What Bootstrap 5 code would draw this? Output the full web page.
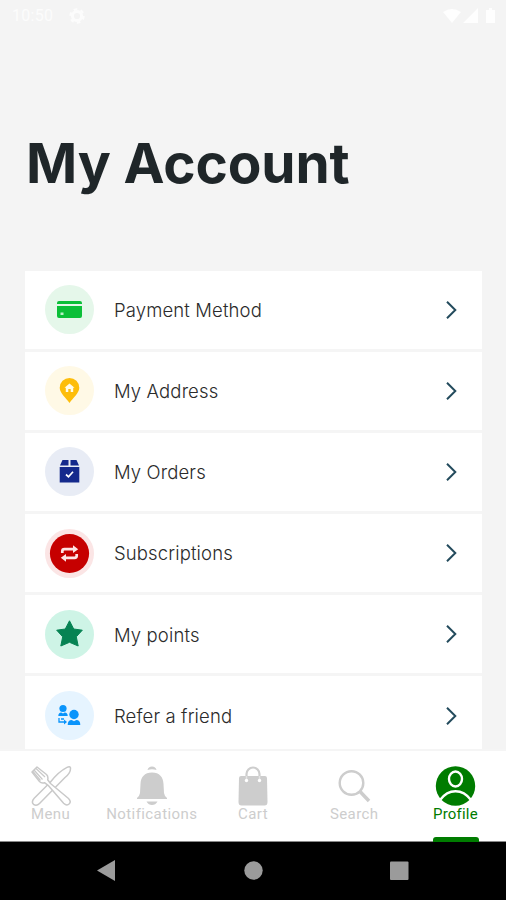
<!DOCTYPE html>
<html lang="en">
<head>
<meta charset="utf-8">
<meta name="viewport" content="width=device-width, initial-scale=1">
<title>My Account</title>
<link href="https://cdn.jsdelivr.net/npm/bootstrap@5.3.0/dist/css/bootstrap.min.css" rel="stylesheet">
<style>
body{background:#f4f4f4;font-family:Inter,"Liberation Sans",sans-serif;color:#222}
.screen{width:506px;height:900px}
.status{height:32px;padding:0 9px 0 12px;font:400 16px/32px Roboto,sans-serif;letter-spacing:.3px;color:#fcfcfc}
.title{height:238.5px;padding:99px 0 0 26px;font-size:55px;font-weight:650;line-height:64px;color:#1f2629;letter-spacing:-.12px}
.menu-rows{margin:0 24px 0 25px}
.menu-row{height:81.2px;border:0;border-bottom:3px solid #f5f5f5;border-radius:0!important;padding:0 25px 0 20px;background:#fff;color:#2b2b2b}
.disc{width:49px;height:49px;margin-right:20px}
.row-label{font-size:18.5px;font-weight:300;letter-spacing:.13px;line-height:24px;padding-top:.5px}
.tabs{height:92px;border-top:2px solid #f5f5f5;font:400 15px/18px Roboto,sans-serif;letter-spacing:.42px;color:#cdcdcd}
.tab{padding-top:14px;color:#cdcdcd;text-decoration:none}
.tab svg{width:42px;height:42px;margin-bottom:-2px}
.tab-on{color:#007c00;letter-spacing:.2px}
.tab-on::after{content:"";position:absolute;bottom:-1px;left:50%;width:46px;height:5px;margin-left:-22.5px;background:#007c00;border-radius:3px 3px 0 0}
.keys{height:59px;background:#000;border-top:1px solid #888}
</style>
<script src="https://cdn.jsdelivr.net/npm/bootstrap@5.3.0/dist/js/bootstrap.bundle.min.js"></script>
</head>
<body>
<div class="screen d-flex flex-column overflow-hidden">
  <header class="status d-flex align-items-center flex-shrink-0">
    <span>10:50</span>
    <svg class="ms-3" width="16" height="16" viewBox="0 0 16 16" fill="none" stroke="currentColor"><circle cx="8" cy="8" r="4.6" stroke-width="3"/><circle cx="8" cy="8" r="6.6" stroke-width="2.2" stroke-dasharray="3.5 3.41"/></svg>
    <svg class="ms-auto" width="54" height="18" viewBox="0 0 54 18" fill="#fefefe"><path d="M0 5Q9-1 18 5L9 16ZM20 16 35 1v15ZM43 3h3V1h3v2h3v13h-9Z"/></svg>
  </header>
  <main class="flex-fill overflow-hidden">
    <h1 class="title m-0">My Account</h1>
    <div class="list-group menu-rows">
      <a href="#" class="list-group-item menu-row d-flex align-items-center">
        <svg class="disc" viewBox="0 0 49 49"><circle cx="24.5" cy="24.5" r="24.5" fill="#e5f7ea"/><path fill="#0bbf38" d="M12 19v-1q0-2 2-2h21q2 0 2 2v1ZM12 21h25v10q0 2-2 2H14q-2 0-2-2Z"/><path fill="#b9f0c6" d="M15.500 27.500h3v2.500h-3Z"/></svg>
        <span class="row-label flex-fill">Payment Method</span>
        <svg width="11" height="18" viewBox="0 0 11 18" fill="none" stroke="#244b5d" stroke-width="2"><path d="m1 .8 8.3 8.2L1 17.2"/></svg>
      </a>
      <a href="#" class="list-group-item menu-row d-flex align-items-center">
        <svg class="disc" viewBox="0 0 49 49"><circle cx="24.5" cy="24.5" r="24.5" fill="#fff9e6"/><path fill="#fdbd0b" d="M24.5 37C21 32 14.7 27 14.7 21.8a9.8 9.8 0 0 1 19.6 0C34.300 27 28 32 24.500 37Z"/><path fill="#fffbe9" d="m24.500 17.500 5 4.200h-1.300V26h-2.500v-3h-2.400v3h-2.500v-4.300h-1.300Z"/></svg>
        <span class="row-label flex-fill">My Address</span>
        <svg width="11" height="18" viewBox="0 0 11 18" fill="none" stroke="#244b5d" stroke-width="2"><path d="m1 .8 8.3 8.2L1 17.2"/></svg>
      </a>
      <a href="#" class="list-group-item menu-row d-flex align-items-center">
        <svg class="disc" viewBox="0 0 49 49"><circle cx="24.5" cy="24.5" r="24.5" fill="#e8ecf5"/><path fill="#14298c" d="M15 18.500 17.500 13h6v5.500ZM25.500 13h6l2.500 5.500h-8.500ZM14.700 20h19.600v15.500H14.700Z"/><path d="m21 27.500 2.500 2.300 4.500-5" fill="none" stroke="#fff" stroke-width="1.700"/></svg>
        <span class="row-label flex-fill">My Orders</span>
        <svg width="11" height="18" viewBox="0 0 11 18" fill="none" stroke="#244b5d" stroke-width="2"><path d="m1 .8 8.3 8.2L1 17.2"/></svg>
      </a>
      <a href="#" class="list-group-item menu-row d-flex align-items-center">
        <svg class="disc" viewBox="0 0 49 49"><circle cx="24.5" cy="24.5" r="24.5" fill="#fbe5e5"/><circle cx="24.500" cy="24.500" r="19.600" fill="#c60000"/><path d="M17.300 24v-1.800q0-2 2.200-2H29M31.700 25v1.800q0 2-2.200 2H20" fill="none" stroke="#fde4e4" stroke-width="2.700"/><path fill="#fde4e4" d="m28 16.300 5.200 3.900L28 24.100ZM21 24.900l-5.200 3.900 5.200 3.900Z"/></svg>
        <span class="row-label flex-fill">Subscriptions</span>
        <svg width="11" height="18" viewBox="0 0 11 18" fill="none" stroke="#244b5d" stroke-width="2"><path d="m1 .8 8.3 8.2L1 17.2"/></svg>
      </a>
      <a href="#" class="list-group-item menu-row d-flex align-items-center">
        <svg class="disc" viewBox="0 0 49 49"><circle cx="24.5" cy="24.5" r="24.5" fill="#cef4e6"/><path fill="#068353" stroke="#068353" stroke-linejoin="round" d="m24.500 10.800 4.200 8.200 8.600 1.200-6 6.600 1.900 9.200-8.700-3.700-8.700 3.700 1.900-9.200-6-6.600 8.600-1.200Z"/></svg>
        <span class="row-label flex-fill">My points</span>
        <svg width="11" height="18" viewBox="0 0 11 18" fill="none" stroke="#244b5d" stroke-width="2"><path d="m1 .8 8.3 8.2L1 17.2"/></svg>
      </a>
      <a href="#" class="list-group-item menu-row d-flex align-items-center">
        <svg class="disc" viewBox="0 0 49 49"><circle cx="24.5" cy="24.5" r="24.5" fill="#e6f4ff"/><g fill="#0a94fb"><circle cx="18" cy="17.500" r="3.600"/><path d="M13.300 25q0-3.500 3-3.500l1.700 1 1.700-1q3 0 3 3.500Z"/><circle cx="29" cy="23.500" r="4.700"/><path d="M22.700 34q0-5 4-5l2.300 1.300 2.300-1.300q4 0 4 5ZM19 28.500l3 2.500-3 2.500Z"/></g><path d="M14 27v4h6M16 28h3" fill="none" stroke="#0a94fb" stroke-width="1.300"/></svg>
        <span class="row-label flex-fill">Refer a friend</span>
        <svg width="11" height="18" viewBox="0 0 11 18" fill="none" stroke="#244b5d" stroke-width="2"><path d="m1 .8 8.3 8.2L1 17.2"/></svg>
      </a>
    </div>
  </main>
  <nav class="tabs bg-white row g-0 flex-shrink-0 text-center">
    <a href="#" class="tab col d-flex flex-column align-items-center">
      <svg viewBox="0 0 42 42" fill="#fff" stroke="#c9c9c9" stroke-width="1.500" stroke-linejoin="round"><path d="M37 2.300q3-1.500 3.500.7.300 5-5.500 9.500L9.500 38.500q-3 3-6 .8-2.500-2.500.7-6L20.500 17Q28 7 37 2.300Z"/><path d="m2 7 5-5 9.500 7.500q2 2 1.200 5.200l2.800 3.800 18 15q3 3 .8 5.300-2.500 2.500-5.700-.5l-15.500-18-3.600-2.600q-3.200.8-5-1.200Z"/><path d="m4 5 8.500 9.500M6 3.500l9 8.500M3 6.500l7.500 9" stroke-width="1.200"/></svg>
      <span>Menu</span></a>
    <a href="#" class="tab col d-flex flex-column align-items-center">
      <svg viewBox="0 0 42 42" fill="#cdcdcd"><path d="M16.500 5q.8-3.500 4.500-3.500T25.500 5q-4.500-1.400-9 0ZM21 7.500C13.500 7.500 9.800 12 9.500 19l-.5 9q-.4 3-3 5v1h30v-1q-2.600-2-3-5l-.5-9C32.200 12 28.500 7.500 21 7.500ZM15.500 36.500h11q-2 3.500-5.500 3.500t-5.500-3.500Z"/></svg>
      <span>Notifications</span></a>
    <a href="#" class="tab col d-flex flex-column align-items-center">
      <svg viewBox="0 0 42 42"><path d="M14.500 16V9a6.500 6.500 0 0 1 13 0v7" fill="none" stroke="#cdcdcd" stroke-width="2.200"/><path fill="#cdcdcd" d="M9 11h24q1.800 0 2 2l.5 24q0 3.500-3 3.500h-23q-3 0-3-3.500L7 13q.2-2 2-2Z"/><path d="M14.500 11v4M27.500 11v4" stroke="#e2e2e2" stroke-width="1.500"/><circle cx="14.500" cy="15.500" r="1.700" fill="#fff"/><circle cx="27.500" cy="15.500" r="1.700" fill="#fff"/></svg>
      <span>Cart</span></a>
    <a href="#" class="tab col d-flex flex-column align-items-center">
      <svg viewBox="0 0 42 42" fill="none" stroke="#cdcdcd"><circle cx="18.500" cy="18" r="11.800" stroke-width="2.400"/><path d="m27 26.500 9 9.500" stroke-width="3.500"/></svg>
      <span>Search</span></a>
    <a href="#" class="tab tab-on position-relative col d-flex flex-column align-items-center">
      <svg viewBox="0 0 42 42"><circle cx="21.500" cy="21" r="19.700" fill="#007c00"/><g fill="none" stroke="#fff" stroke-width="2.400"><ellipse cx="21.500" cy="14" rx="6.500" ry="7.500"/><path d="M6 35Q12.500 26.200 21.500 26.200T37 35"/></g></svg>
      <span>Profile</span></a>
  </nav>
  <footer class="keys flex-shrink-0">
    <svg width="506" height="57" viewBox="0 0 506 57" fill="#9b9b9b"><path d="M97 28.500 115 18v21Z"/><circle cx="253.500" cy="28.500" r="9.200"/><rect x="390" y="19.500" width="18.500" height="18.500" rx="1"/></svg>
  </footer>
</div>
</body>
</html>
